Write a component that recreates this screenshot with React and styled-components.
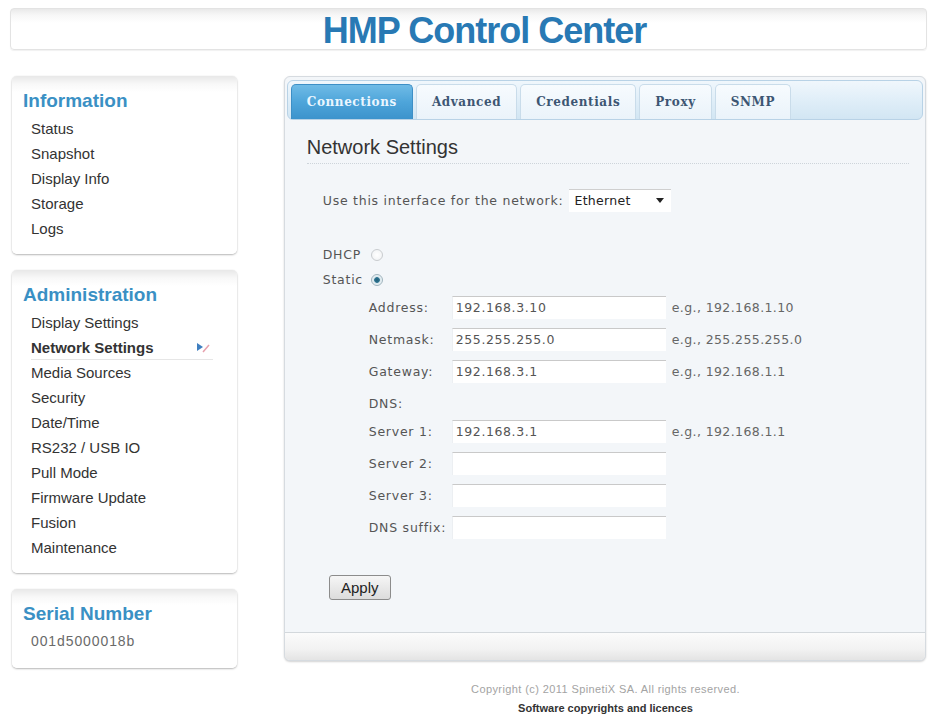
import React from "react";
import styled, { createGlobalStyle } from "styled-components";

const Global = createGlobalStyle`
  html, body { margin: 0; padding: 0; background: #ffffff; }
  body { font-family: "Liberation Sans", Arial, sans-serif; color: #333; }
  * { box-sizing: border-box; }
`;

const Page = styled.div`
  width: 934px;
  padding: 8px 8px 0 10px;
`;

const Header = styled.header`
  height: 42px;
  width: 917px;
  border: 1px solid #e3e3e3;
  border-radius: 4px;
  background: linear-gradient(#e9e9e9 0, #f7f7f7 6px, #ffffff 14px, #ffffff 100%);
  box-shadow: 0 1px 1px rgba(0,0,0,0.06);
  display: flex;
  align-items: center;
  justify-content: center;
  padding-left: 32px;
`;

const Title = styled.h1`
  margin: 0;
  font-family: "Liberation Sans Narrow", "Liberation Sans", Arial, sans-serif;
  font-weight: bold;
  font-size: 36px;
  letter-spacing: -1px;
  color: #2879b4;
  line-height: 1;
  padding-top: 4px;
`;

const Body = styled.div`
  display: flex;
  align-items: flex-start;
  margin-top: 26px;
  gap: 47px;
`;

const Sidebar = styled.aside`
  width: 225px;
  margin-left: 2px;
  display: flex;
  flex-direction: column;
  gap: 16px;
`;

const Panel = styled.section`
  border-radius: 5px;
  background: linear-gradient(#e8e8e8 0, #f8f8f8 8px, #ffffff 16px, #ffffff 100%);
  box-shadow: 0 1px 2px rgba(0,0,0,0.28), 0 0 1px rgba(0,0,0,0.12);
  padding: 13px 0 ${p => p.$pb || 13}px 11px;
`;

const PanelTitle = styled.h2`
  margin: 0 0 3px;
  font-size: 19px;
  line-height: 24px;
  font-weight: bold;
  color: #3a90c4;
`;

const NavList = styled.ul`
  list-style: none;
  margin: 0;
  padding: 0 0 0 8px;
`;

const NavItem = styled.li`
  font-size: 15px;
  line-height: 25px;
  height: 25px;
  color: #333;
  font-weight: ${p => (p.$active ? "bold" : "normal")};
  display: flex;
  align-items: center;
  ${p => p.$active && `
    width: 182px;
    border-bottom: 1px solid #e6e6e6;
    justify-content: space-between;
  `}
`;

const Serial = styled.div`
  font-size: 14px;
  letter-spacing: 0.9px;
  line-height: 25px;
  color: #6a6a6a;
  padding-left: 8px;
`;

const Main = styled.main`
  width: 643px;
  border: 1px solid #d6dbe0;
  border-radius: 6px;
  background: #f3f6f9;
  box-shadow: 0 1px 2px rgba(0,0,0,0.18);
  padding: 3px 2px 0;
  overflow: hidden;
`;

const TabBar = styled.nav`
  height: 40px;
  border: 1px solid #b8d2e6;
  border-radius: 6px;
  background: linear-gradient(#f0f7fc 0, #e0eef8 50%, #d2e6f3 100%);
  display: flex;
  align-items: flex-end;
  gap: 3px;
  padding-left: 3px;
`;

const Tab = styled.div`
  height: 35px;
  padding: 0 15px;
  border-radius: 5px 5px 0 0;
  display: flex;
  align-items: center;
  font-family: "DejaVu Serif", "Liberation Serif", serif;
  font-weight: bold;
  font-size: 12px;
  letter-spacing: 0.6px;
  color: ${p => (p.$active ? "#eaf6ff" : "#3d5673")};
  background: ${p =>
    p.$active
      ? "linear-gradient(#6fbbe6 0, #4ea5da 50%, #3c93cc 100%)"
      : "linear-gradient(#f7fbfe 0, #eaf3fa 100%)"};
  border: 1px solid ${p => (p.$active ? "#3d8fc6" : "#c9dcea")};
  border-bottom: none;
`;

const Content = styled.div`
  height: 512px;
  padding: 13px 14px 0 20px;
`;

const Heading = styled.h3`
  margin: 0;
  font-size: 20px;
  font-weight: normal;
  line-height: 28px;
  color: #333;
  padding-bottom: 2px;
  border-bottom: 1px dotted #cdd4da;
`;

const Form = styled.div`
  padding-left: 16px;
  font-family: "DejaVu Sans", Verdana, sans-serif;
  font-size: 12.5px;
  letter-spacing: 0.75px;
  color: #555;
`;

const InterfaceRow = styled.div`
  margin-top: 24px;
  display: flex;
  align-items: center;
  gap: 6px;
  height: 24px;
`;

const Select = styled.div`
  width: 102px;
  height: 23px;
  background: #fff;
  border-top: 1px solid #cfcfcf;
  display: flex;
  align-items: center;
  justify-content: space-between;
  padding: 0 7px 0 5px;
  color: #222;
  letter-spacing: 0.3px;
`;

const Caret = styled.span`
  width: 0;
  height: 0;
  border-left: 4px solid transparent;
  border-right: 4px solid transparent;
  border-top: 5px solid #222;
`;

const RadioGroup = styled.div`
  margin-top: 30px;
  display: grid;
  grid-template-columns: 48px 12px;
  grid-auto-rows: 25px;
  align-items: center;
`;

const Radio = styled.span`
  width: 12px;
  height: 12px;
  border-radius: 50%;
  border: 1px solid ${p => (p.$checked ? "#9fb3bd" : "#c9cccf")};
  background: ${p =>
    p.$checked
      ? "radial-gradient(circle, #1f5f78 0, #2e7390 35%, #d8e6ec 45%, #ffffff 100%)"
      : "radial-gradient(circle, #ffffff 0, #eef0f2 100%)"};
`;

const Fields = styled.div`
  margin-top: -1px;
  padding-left: 46px;
  display: grid;
  grid-template-columns: 77px 214px auto;
  column-gap: 6px;
  align-items: center;
`;

const FieldLabel = styled.span`
  height: ${p => p.$h || 32}px;
  padding-top: ${p => p.$pt || 0}px;
  display: flex;
  align-items: center;
  white-space: nowrap;
`;

const Input = styled.input`
  height: 23px;
  width: 214px;
  border: none;
  border-top: 1px solid #c9c9c9;
  border-left: 1px solid #eceff2;
  background: #fff;
  font-family: "DejaVu Sans", Verdana, sans-serif;
  font-size: 12.5px;
  letter-spacing: 0.6px;
  color: #555;
  padding: 0 0 0 3px;
  outline: none;
`;

const Example = styled.span`
  color: #666;
  letter-spacing: 0.4px;
  white-space: nowrap;
`;

const ApplyButton = styled.button`
  margin: 32px 0 0 6px;
  width: 62px;
  height: 25px;
  border: 1px solid #8c8c8c;
  border-radius: 3px;
  background: linear-gradient(#f6f6f6, #dcdcdc);
  font-family: "Liberation Sans", Arial, sans-serif;
  font-size: 15px;
  color: #222;
  padding: 0;
`;

const PanelFooter = styled.div`
  height: 28px;
  margin: 0 -2px;
  border-top: 1px solid #d3d8dc;
  background: linear-gradient(#fbfbfb 0, #f2f2f2 60%, #e4e4e4 100%);
`;

const Footer = styled.footer`
  margin: 12px 0 0 274px;
  width: 643px;
  text-align: center;
  font-size: 11px;
  line-height: 19px;
`;

const Copyright = styled.div`
  color: #a3a3a3;
  letter-spacing: 0.4px;
`;

const Licences = styled.div`
  color: #333;
  font-weight: bold;
`;

const ArrowIcon = () => (
  <svg width="20" height="16" viewBox="0 0 20 16">
    <polygon points="4,4 10,8 4,12" fill="#3f7fc0" />
    <line x1="10" y1="13" x2="16" y2="6" stroke="#e7a1ad" strokeWidth="1.5" />
  </svg>
);

const infoItems = ["Status", "Snapshot", "Display Info", "Storage", "Logs"];
const adminItems = [
  "Display Settings",
  "Network Settings",
  "Media Sources",
  "Security",
  "Date/Time",
  "RS232 / USB IO",
  "Pull Mode",
  "Firmware Update",
  "Fusion",
  "Maintenance",
];
const tabs = ["Connections", "Advanced", "Credentials", "Proxy", "SNMP"];

const fields = [
  { label: "Address:", value: "192.168.3.10", ex: "e.g., 192.168.1.10" },
  { label: "Netmask:", value: "255.255.255.0", ex: "e.g., 255.255.255.0" },
  { label: "Gateway:", value: "192.168.3.1", ex: "e.g., 192.168.1.1" },
  { label: "DNS:", dns: true },
  { label: "Server 1:", value: "192.168.3.1", ex: "e.g., 192.168.1.1" },
  { label: "Server 2:", value: "" },
  { label: "Server 3:", value: "" },
  { label: "DNS suffix:", value: "" },
];

export default function App() {
  return (
    <Page>
      <Global />
      <Header>
        <Title>HMP Control Center</Title>
      </Header>
      <Body>
        <Sidebar>
          <Panel $pb={13}>
            <PanelTitle>Information</PanelTitle>
            <NavList>
              {infoItems.map(i => (
                <NavItem key={i}>{i}</NavItem>
              ))}
            </NavList>
          </Panel>
          <Panel $pb={13}>
            <PanelTitle>Administration</PanelTitle>
            <NavList>
              {adminItems.map(i =>
                i === "Network Settings" ? (
                  <NavItem key={i} $active>
                    {i}
                    <ArrowIcon />
                  </NavItem>
                ) : (
                  <NavItem key={i}>{i}</NavItem>
                )
              )}
            </NavList>
          </Panel>
          <Panel $pb={14}>
            <PanelTitle>Serial Number</PanelTitle>
            <Serial>001d5000018b</Serial>
          </Panel>
        </Sidebar>
        <Main>
          <TabBar>
            {tabs.map((t, i) => (
              <Tab key={t} $active={i === 0}>
                {t}
              </Tab>
            ))}
          </TabBar>
          <Content>
            <Heading>Network Settings</Heading>
            <Form>
              <InterfaceRow>
                <span>Use this interface for the network:</span>
                <Select>
                  Ethernet
                  <Caret />
                </Select>
              </InterfaceRow>
              <RadioGroup>
                <span>DHCP</span>
                <Radio />
                <span>Static</span>
                <Radio $checked />
              </RadioGroup>
              <Fields>
                {fields.map(f =>
                  f.dns ? (
                    <React.Fragment key={f.label}>
                      <FieldLabel $h={28} $pt={5}>{f.label}</FieldLabel>
                      <span />
                      <span />
                    </React.Fragment>
                  ) : (
                    <React.Fragment key={f.label}>
                      <FieldLabel>{f.label}</FieldLabel>
                      <Input readOnly value={f.value} />
                      <Example>{f.ex || ""}</Example>
                    </React.Fragment>
                  )
                )}
              </Fields>
              <ApplyButton>Apply</ApplyButton>
            </Form>
          </Content>
          <PanelFooter />
        </Main>
      </Body>
      <Footer>
        <Copyright>Copyright (c) 2011 SpinetiX SA. All rights reserved.</Copyright>
        <Licences>Software copyrights and licences</Licences>
      </Footer>
    </Page>
  );
}
